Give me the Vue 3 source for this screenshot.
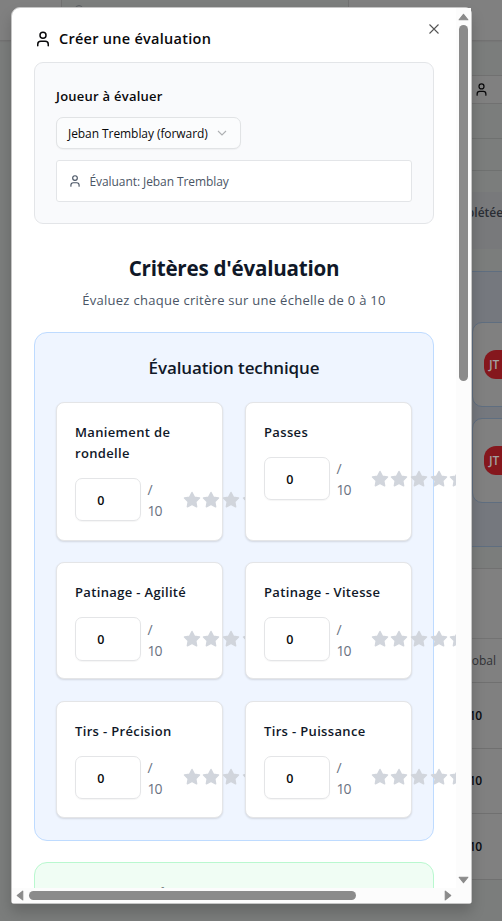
<script setup>
const criteria = [
  'Maniement de rondelle',
  'Passes',
  'Patinage - Agilité',
  'Patinage - Vitesse',
  'Tirs - Précision',
  'Tirs - Puissance',
]
const scores = ['10', '10', '10']
</script>

<template>
  <div class="page">
    <div class="backdrop">
      <div class="topbar">
        <div class="search"><span class="search-ring"></span></div>
      </div>
      <div class="account">
        <svg class="user" viewBox="0 0 24 24"><path d="M19 21v-2a4 4 0 0 0-4-4H9a4 4 0 0 0-4 4v2" /><circle cx="12" cy="7" r="4" /></svg>
      </div>
      <div class="strip"></div>
      <div class="done"><span>Complétées</span></div>
      <div class="list">
        <div v-for="n in 2" :key="n" class="player"><span class="avatar">JT</span></div>
      </div>
      <div class="table">
        <div class="thead"></div>
        <div class="tcol"><span>Global</span></div>
        <div v-for="(s, i) in scores" :key="i" class="trow"><span>{{ s }}</span></div>
      </div>
    </div>

    <div class="modal">
      <div class="viewport">
        <header class="head">
          <svg class="user" viewBox="0 0 24 24"><path d="M19 21v-2a4 4 0 0 0-4-4H9a4 4 0 0 0-4 4v2" /><circle cx="12" cy="7" r="4" /></svg>
          <h2><span>Créer une évaluation</span></h2>
          <svg class="close" viewBox="0 0 10 10"><path d="M.5 .5l9 9M9.5 .5l-9 9" /></svg>
        </header>

        <section class="who">
          <h3><span>Joueur à évaluer</span></h3>
          <div class="select">
            <span>Jeban Tremblay (forward)</span>
            <svg viewBox="0 0 10 6"><path d="M1 1l4 4 4-4" /></svg>
          </div>
          <div class="evaluator">
            <svg class="user" viewBox="0 0 24 24"><path d="M19 21v-2a4 4 0 0 0-4-4H9a4 4 0 0 0-4 4v2" /><circle cx="12" cy="7" r="4" /></svg>
            <span>Évaluant: Jeban Tremblay</span>
          </div>
        </section>

        <div class="intro">
          <h1><span>Critères d'évaluation</span></h1>
          <p><span>Évaluez chaque critère sur une échelle de 0 à 10</span></p>
        </div>

        <section class="group blue">
          <h4><span>Évaluation technique</span></h4>
          <div class="grid">
            <div v-for="c in criteria" :key="c" class="card">
              <label><span>{{ c }}</span></label>
              <div class="rate">
                <div class="field">0</div>
                <div class="max">/<br />10</div>
                <div class="stars">
                  <svg v-for="n in 5" :key="n" viewBox="0 0 24 24"><path d="M12 2l3.09 6.26L22 9.27l-5 4.87 1.18 6.88L12 17.77l-6.18 3.25L7 14.14 2 9.27l6.91-1.01z" /></svg>
                </div>
              </div>
            </div>
          </div>
        </section>

        <section class="group green">
          <h4><span>Évaluation tactique</span></h4>
        </section>
      </div>

      <div class="vbar">
        <svg viewBox="0 0 10 7"><path d="M5 1L9 6H1z" /></svg>
        <div class="thumb"></div>
        <svg class="last" viewBox="0 0 10 7"><path d="M5 6L9 1H1z" /></svg>
      </div>
      <div class="hbar">
        <svg viewBox="0 0 7 10"><path d="M1 5L6 1v8z" /></svg>
        <div class="thumb"></div>
        <svg class="last" viewBox="0 0 7 10"><path d="M6 5L1 1v8z" /></svg>
      </div>
      <div class="corner"></div>
    </div>
  </div>
</template>

<style>
body { background: #7b7d7c; overflow: hidden; }
</style>

<style scoped>
* { box-sizing: border-box; }
h1, h2, h3, h4, p { margin: 0; }
.page { position: relative; width: 502px; height: 921px; overflow: hidden; font-family: "Open Sans", "Noto Sans", sans-serif; color: #09090b; background: #7b7d7c; }
svg { display: block; flex: none; }
.user { fill: none; stroke: currentColor; stroke-width: 2; stroke-linecap: round; stroke-linejoin: round; }

.backdrop { display: flex; flex-direction: column; height: 921px; padding-left: 20px; }
.topbar { flex: none; height: 41px; margin-left: -20px; background: #808080; border-bottom: 1px solid #727272; box-shadow: 0 1px 1px #777; }
.search { width: 288px; height: 36px; margin-left: 61px; padding: 5px 0 0 13px; background: #7c7e7d; border: solid #717171; border-width: 0 1px; }
.search-ring { display: block; width: 8px; height: 8px; border: 1px solid #5b5e62; border-radius: 50%; }
.account { flex: none; margin-top: 34px; height: 29px; background: #808080; border: solid #717171; border-width: 1px 0; display: flex; align-items: center; padding-left: 454px; }
.account .user { width: 15px; height: 15px; }
.strip { flex: none; margin-top: 34px; height: 33px; border: solid #6f7170; border-width: 1px 0; }
.done { flex: none; margin-top: 21px; height: 57px; background: #78797b; display: flex; justify-content: flex-end; align-items: center; }
.done span { flex: none; font-size: 12px; font-weight: 600; color: #292d34; margin: -16px -7px 0 0; }
.list { flex: none; margin-top: 22px; height: 276px; background: #75787e; border: solid #5f6e80; border-width: 1px 0; padding: 50px 0 0 452px; display: flex; flex-direction: column; gap: 11px; }
.player { width: 60px; height: 85px; border: 1px solid #5f6e80; border-radius: 10px; background: #808080; display: flex; align-items: center; padding-left: 11px; }
.avatar { width: 29px; height: 29px; border-radius: 12px; background: #85171d; color: #a3a0a0; font-size: 12px; font-weight: 600; line-height: 30px; padding-left: 5px; }
.table { flex: none; margin-top: 21px; height: 312px; background: #808080; border: solid #717171; border-width: 1px 0; }
.thead { height: 70px; border-bottom: 1px solid #737373; }
.tcol, .trow { display: flex; align-items: center; border-bottom: 1px solid #707070; }
.tcol { height: 44px; padding-left: 440px; font-size: 12px; color: #303236; }
.trow { height: 65.5px; font-size: 12px; font-weight: 600; color: #080a10; padding-left: 449px; letter-spacing: -.7px; }

.modal { position: absolute; left: 11px; top: 7px; width: 461px; height: 897px; display: grid; grid-template-columns: 444px 15px; grid-template-rows: 880px 15px; background: #fff; border: 1px solid #c5c5c5; border-radius: 9px 7px 3px 3px; box-shadow: 0 8px 14px rgba(0, 0, 0, .18); }
.viewport { overflow: hidden; padding: 19px 22px 0; border-top-left-radius: 8px; }
.head { height: 35px; display: flex; align-items: flex-start; }
.head .user { width: 18px; height: 18px; margin: 3px 7px 0 0; }
.head h2 { flex: none; font-size: 14.5px; font-weight: 600; line-height: 23px; width: 160px; white-space: nowrap; letter-spacing: .27px; }
.close { width: 10px; height: 10px; margin: -3px 0 0 210px; fill: none; stroke: #555; stroke-width: 1.1; }
.who { height: 162px; border: 1px solid #e3e5e8; border-radius: 9px; background: #f9fafc; padding: 23px 21px 0; }
h3 { font-size: 13px; font-weight: 600; line-height: 21px; letter-spacing: .25px; }
.select { display: flex; align-items: center; justify-content: space-between; width: 185px; height: 32px; margin-top: 10px; padding: 0 13px 0 11px; background: #fbfcfd; border: 1px solid #e1e3e5; border-radius: 7px; font-size: 12px; letter-spacing: -.07px; color: #09090b; white-space: nowrap; box-shadow: 0 1px 1px rgba(0, 0, 0, .04); }
.select svg { width: 10px; height: 6px; fill: none; stroke: #aeb0b3; stroke-width: 1.1; }
.evaluator { display: flex; align-items: center; gap: 7.5px; height: 42px; margin-top: 11px; padding-left: 11px; background: #fff; border: 1px solid #e3e5e8; border-radius: 3px; font-size: 12px; letter-spacing: -.08px; color: #4a5565; white-space: nowrap; }
.evaluator .user { width: 14px; height: 14px; }

.intro { height: 108px; padding-top: 29px; text-align: center; white-space: nowrap; }
h1 { font-size: 20.6px; font-weight: 700; line-height: 30px; letter-spacing: -.23px; color: #101828; }
p { font-size: 13px; line-height: 20px; margin-top: 7px; letter-spacing: .28px; color: #4a5565; }

.group { border: 1px solid; border-radius: 13px; padding: 20px 21px 0; }
.blue { height: 509px; background: #eff5ff; border-color: #bedbff; }
.green { height: 300px; margin-top: 21px; padding-top: 19px; background: #f0fdf4; border-color: #b9f8cf; }
h4 { font-size: 17px; font-weight: 600; line-height: 30px; height: 49px; text-align: center; letter-spacing: -.13px; color: #101828; white-space: nowrap; }
.grid { display: grid; grid-template-columns: 167px 167px; grid-template-rows: 139px 117px 117px; gap: 21.4px 22px; }
.card { min-width: 0; padding: 19px 18px 0; background: #fff; border: 1px solid #e4e5e7; border-radius: 8px; box-shadow: 0 1px 2px rgba(0, 0, 0, .12); }
.card:nth-child(even) { position: relative; }
label { display: block; font-size: 13px; font-weight: 600; line-height: 21px; letter-spacing: .34px; color: #101828; }
.rate { display: flex; align-items: center; margin-top: 14px; }
.field { flex: none; width: 65.5px; height: 43.3px; border: 1px solid #e4e5e7; border-radius: 7px; padding-right: 14px; text-align: center; font-size: 12.5px; font-weight: 600; line-height: 43px; color: #09090b; box-shadow: 0 1px 1px rgba(0, 0, 0, .04); }
.max { flex: none; width: 36px; padding: 1px 0 0 7px; font-size: 14px; font-weight: 500; line-height: 21px; letter-spacing: -1px; color: #6a7282; }
.stars { flex: none; display: flex; gap: 1.7px; margin-left: 6px; }
.card:nth-child(even) .stars { margin-left: 5px; }
.stars svg { width: 18px; height: 18px; fill: #d1d5dc; stroke: #d1d5dc; stroke-width: 2; stroke-linejoin: round; }

.vbar, .hbar, .corner { background: #fcfcfc; }
.vbar { display: flex; flex-direction: column; align-items: center; padding: 5px 0 4px; }
.hbar { display: flex; align-items: center; padding: 0 4px; }
.vbar svg { width: 11px; height: 8px; fill: #8b8b8b; stroke: #8b8b8b; stroke-linejoin: round; }
.hbar svg { width: 8px; height: 11px; fill: #8b8b8b; stroke: #8b8b8b; stroke-linejoin: round; }
.thumb { background: #8b8b8b; border-radius: 5px; flex: none; }
.vbar .thumb { width: 9px; height: 356px; margin-top: 4px; }
.hbar .thumb { height: 9px; width: 327px; margin-left: 5px; }
.vbar .last { margin-top: auto; }
.hbar .last { margin-left: auto; }
</style>
